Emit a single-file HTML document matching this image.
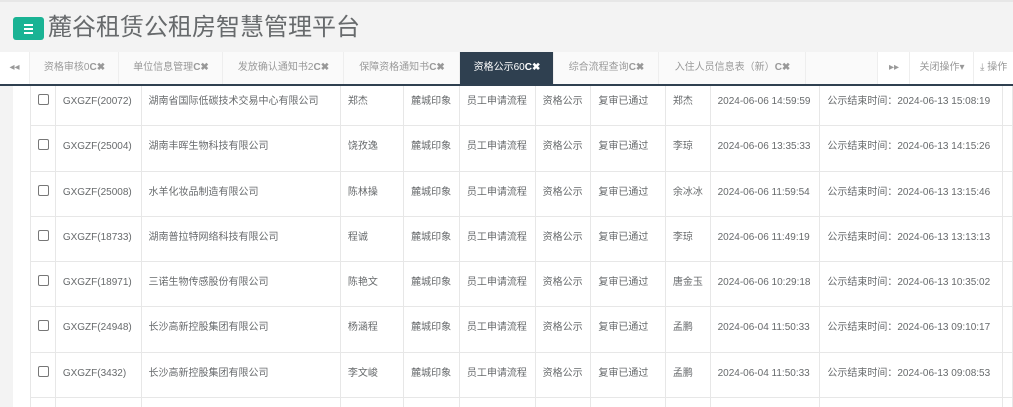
<html><head><style>
html,body{margin:0;width:1013px;height:407px;overflow:hidden}
body{background:#fff;font-family:"Liberation Sans","Noto Sans CJK SC",sans-serif;position:relative}
.hd{position:absolute;left:0;top:0;width:1013px;height:52px;background:#f3f3f3;border-top:2px solid #e7e7e7;box-sizing:border-box;z-index:3}
.btn{position:absolute;left:13px;top:15px;width:31px;height:23px;background:#1ab394;border-radius:3px}
.btn i{position:absolute;left:11px;width:9px;height:2px;background:#fff}
.title{position:absolute;left:48px;top:7px;font-size:24px;color:#676a6c;font-family:"Noto Sans CJK SC",sans-serif;line-height:32px}
.tabs{position:absolute;left:0;top:52px;width:1013px;height:32px;background:#fff;border-bottom:2px solid #2f4050;font-size:10px;color:#999;z-index:3}
.t{position:absolute;top:0;height:32px;line-height:32px;text-align:center;border-left:1px solid #eee;background:#fafafa}
.t.a{background:#2f4050;color:#fff}
.t b{color:#999;font-size:10px}
.t.a b{color:#fff}
.left{position:absolute;left:0;top:86px;width:13px;height:321px;background:#f3f3f3}
.wrap{position:absolute;left:30px;top:80px;width:983px;height:327px;overflow:hidden}
table{border-collapse:collapse;font-size:10px;color:#676a6c;table-layout:fixed}
td{border:1px solid #e7e7e7;height:45.3px;vertical-align:top;padding:14px 0 0 7px;line-height:14px;box-sizing:border-box;white-space:nowrap;overflow:hidden}
.cb{display:inline-block;width:9px;height:9px;border:1px solid #777;border-radius:2px;vertical-align:top;margin-top:-1px}
</style></head><body>
<div class="hd"><div class="btn"><i style="top:7px"></i><i style="top:11px"></i><i style="top:15px"></i></div><div class="title">麓谷租赁公租房智慧管理平台</div></div>
<div class="left"></div>
<div class="wrap"><table>
<colgroup><col style="width:25px"><col style="width:86px"><col style="width:200px"><col style="width:64px"><col style="width:56px"><col style="width:76px"><col style="width:56px"><col style="width:75px"><col style="width:45px"><col style="width:110px"><col style="width:183px"><col style="width:10px"></colgroup>
<tr><td><span class="cb"></span></td><td>GXGZF(20072)</td><td>湖南省国际低碳技术交易中心有限公司</td><td>郑杰</td><td>麓城印象</td><td>员工申请流程</td><td>资格公示</td><td>复审已通过</td><td>郑杰</td><td>2024-06-06 14:59:59</td><td>公示结束时间：2024-06-13 15:08:19</td><td></td></tr>
<tr><td><span class="cb"></span></td><td>GXGZF(25004)</td><td>湖南丰晖生物科技有限公司</td><td>饶孜逸</td><td>麓城印象</td><td>员工申请流程</td><td>资格公示</td><td>复审已通过</td><td>李琼</td><td>2024-06-06 13:35:33</td><td>公示结束时间：2024-06-13 14:15:26</td><td></td></tr>
<tr><td><span class="cb"></span></td><td>GXGZF(25008)</td><td>水羊化妆品制造有限公司</td><td>陈林操</td><td>麓城印象</td><td>员工申请流程</td><td>资格公示</td><td>复审已通过</td><td>余冰冰</td><td>2024-06-06 11:59:54</td><td>公示结束时间：2024-06-13 13:15:46</td><td></td></tr>
<tr><td><span class="cb"></span></td><td>GXGZF(18733)</td><td>湖南普拉特网络科技有限公司</td><td>程诚</td><td>麓城印象</td><td>员工申请流程</td><td>资格公示</td><td>复审已通过</td><td>李琼</td><td>2024-06-06 11:49:19</td><td>公示结束时间：2024-06-13 13:13:13</td><td></td></tr>
<tr><td><span class="cb"></span></td><td>GXGZF(18971)</td><td>三诺生物传感股份有限公司</td><td>陈艳文</td><td>麓城印象</td><td>员工申请流程</td><td>资格公示</td><td>复审已通过</td><td>唐金玉</td><td>2024-06-06 10:29:18</td><td>公示结束时间：2024-06-13 10:35:02</td><td></td></tr>
<tr><td><span class="cb"></span></td><td>GXGZF(24948)</td><td>长沙高新控股集团有限公司</td><td>杨涵程</td><td>麓城印象</td><td>员工申请流程</td><td>资格公示</td><td>复审已通过</td><td>孟鹏</td><td>2024-06-04 11:50:33</td><td>公示结束时间：2024-06-13 09:10:17</td><td></td></tr>
<tr><td><span class="cb"></span></td><td>GXGZF(3432)</td><td>长沙高新控股集团有限公司</td><td>李文峻</td><td>麓城印象</td><td>员工申请流程</td><td>资格公示</td><td>复审已通过</td><td>孟鹏</td><td>2024-06-04 11:50:33</td><td>公示结束时间：2024-06-13 09:08:53</td><td></td></tr>
<tr><td></td><td></td><td></td><td></td><td></td><td></td><td></td><td></td><td></td><td></td><td></td><td></td></tr>
</table></div>
<div class="tabs">
<div class="t" style="left:0;width:29px;background:#fff;border:0">◂◂</div>
<div class="t" style="left:29px;width:89px">资格审核0<b>C✖</b></div>
<div class="t" style="left:118px;width:104px">单位信息管理<b>C✖</b></div>
<div class="t" style="left:222px;width:121px">发放确认通知书2<b>C✖</b></div>
<div class="t" style="left:343px;width:116px">保障资格通知书<b>C✖</b></div>
<div class="t a" style="left:459px;width:94px">资格公示60<b>C✖</b></div>
<div class="t" style="left:553px;width:105px">综合流程查询<b>C✖</b></div>
<div class="t" style="left:658px;width:147px">入住人员信息表（新）<b>C✖</b></div>
<div class="t" style="left:805px;width:72px"></div>
<div class="t" style="left:877px;width:32px;background:#fff">▸▸</div>
<div class="t" style="left:909px;width:64px;background:#fff">关闭操作▾</div>
<div class="t" style="left:973px;width:40px;background:#fff;text-align:left;padding-left:6px">⤓ 操作</div>
</div>
</body></html>
